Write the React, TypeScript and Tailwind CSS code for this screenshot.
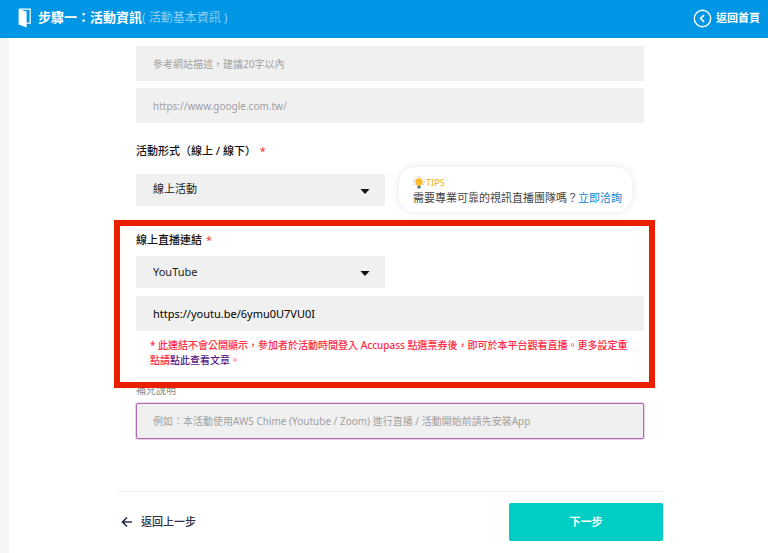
import { useState } from "react";
import type { ReactNode } from "react";

const eventTypes = ["線上活動", "線下活動"];
const platforms = ["YouTube", "Zoom", "Facebook"];

export default function App() {
  const [eventType, setEventType] = useState("線上活動");
  const [platform, setPlatform] = useState("YouTube");
  const [siteText, setSiteText] = useState("");
  const [siteUrl, setSiteUrl] = useState("");
  const [streamUrl, setStreamUrl] = useState("https://youtu.be/6ymu0U7VU0I");
  const [note, setNote] = useState("");

  return (
    <div className="flex min-h-screen flex-col bg-[#f5f5f5] font-['Noto_Sans','Noto_Sans_CJK_TC',sans-serif] text-[11px] text-[#222]">
      <header className="flex h-[38px] items-center justify-between bg-[#0096e6] pr-2 pb-[2px] pl-[18px] text-white">
        <div className="flex items-center gap-[7px]">
          <DoorIcon />
          <h1 className="pb-[2px] text-[13px] leading-4 font-bold">
            步驟一：活動資訊<span className="text-[12px] font-normal text-[#8dcff5]">( 活動基本資訊 )</span>
          </h1>
        </div>
        <a href="#home" className="flex items-center gap-1 font-bold">
          <svg width="19" height="19" viewBox="0 0 19 19" fill="none" stroke="currentColor" aria-hidden="true">
            <circle cx="9.5" cy="9.5" r="8.2" strokeWidth="1.4" />
            <path d="M11 6.2 7.7 9.5l3.3 3.3" strokeWidth="1.7" />
          </svg>
          返回首頁
        </a>
      </header>

      <main className="ml-[9px] flex-1 bg-white pt-2 pb-3 pl-[3px]">
        <form className="mx-auto max-w-[546px]" onSubmit={(event) => event.preventDefault()}>
          <div className="px-[19px]">
            <div className="flex flex-col gap-[7px]">
              <TextField id="site-text" ariaLabel="參考網站描述" value={siteText} onChange={setSiteText} placeholder="參考網站描述，建議20字以內" />
              <TextField id="site-url" ariaLabel="參考網站" value={siteUrl} onChange={setSiteUrl} placeholder="https://www.google.com.tw/" />
            </div>

            <section className="mt-5">
              <FieldLabel htmlFor="event-type">
                活動形式（線上 / 線下） <Required />
              </FieldLabel>
              <div className="mt-2 flex items-center gap-[14px]">
                <Select id="event-type" value={eventType} onChange={setEventType} options={eventTypes} />
                <aside className="rounded-2xl bg-white pt-2 pr-[10px] pb-[6px] pl-[14px] shadow-[0_0_8px_rgba(0,0,0,0.1)]">
                  <p className="flex items-center gap-px text-[9px] leading-[15px] font-medium text-[#fbb62b]">
                    <BulbIcon />
                    TIPS
                  </p>
                  <p className="leading-4 whitespace-nowrap text-[#444]">
                    需要專業可靠的視訊直播團隊嗎？
                    <a href="#contact" className="text-[#0a84d0]">立即洽詢</a>
                  </p>
                </aside>
              </div>
            </section>

            <section className="relative mt-5">
              <FieldLabel htmlFor="platform">
                線上直播連結 <Required />
              </FieldLabel>
              <div className="mt-2 flex flex-col gap-2">
                <Select id="platform" value={platform} onChange={setPlatform} options={platforms} />
                <TextField id="stream-url" ariaLabel="直播網址" value={streamUrl} onChange={setStreamUrl} large />
              </div>
              <p className="mt-[7px] pr-3 pl-[14px] text-[10px] leading-[15px] font-medium text-[#ff2b43]">
                * 此連結不會公開顯示，參加者於活動時間登入 Accupass 點選票券後，即可於本平台觀看直播。更多設定重點請
                <a href="#article" className="text-[#551a8b]">點此查看文章</a>。
              </p>
              {/* highlight frame around the live stream settings */}
              <div className="pointer-events-none absolute -top-3 -right-[11px] -bottom-5 -left-[22px] border-[6px] border-[#e82000]" />
            </section>

            <section className="mt-[14px]">
              <label htmlFor="note" className="block text-[10px] leading-4 text-[#888]">補充說明</label>
              <input
                id="note"
                className="mt-[5px] block h-9 w-full rounded-[2px] border border-[#b06ab3] bg-[#f0f0f0] px-4 text-[10px] ring-1 ring-[#b06ab3]/30 outline-none placeholder:text-[#a0a0a0]"
                onChange={(event) => setNote(event.target.value)}
                placeholder="例如：本活動使用AWS Chime (Youtube / Zoom) 進行直播 / 活動開始前請先安裝App"
                value={note}
              />
            </section>
          </div>

          <footer className="mt-[52px] flex items-center justify-between border-t border-[#f0f0f0] pt-[11px]">
            <button type="button" className="flex items-center gap-2 pl-1 font-medium text-[#2c3048]">
              <svg width="12" height="12" viewBox="0 0 12 12" fill="none" stroke="currentColor" strokeWidth="1.7" aria-hidden="true">
                <path d="M11 6H2M6 1.5 1.5 6 6 10.5" />
              </svg>
              返回上一步
            </button>
            <button type="submit" className="h-[38px] w-[154px] rounded-[2px] bg-[#00cec4] font-bold text-white">
              下一步
            </button>
          </footer>
        </form>
      </main>
    </div>
  );
}

function FieldLabel({ htmlFor, children }: { htmlFor: string; children: ReactNode }) {
  return (
    <label htmlFor={htmlFor} className="block leading-4 font-medium text-[#111]">
      {children}
    </label>
  );
}

function Required() {
  return <span className="ml-px text-[#f04848]">*</span>;
}

type TextFieldProps = {
  id: string;
  ariaLabel: string;
  value: string;
  onChange: (value: string) => void;
  placeholder?: string;
  large?: boolean;
};

function TextField({ id, ariaLabel, value, onChange, placeholder, large }: TextFieldProps) {
  return (
    <input
      id={id}
      aria-label={ariaLabel}
      className={`h-[35px] w-full bg-[#f0f0f0] px-[17px] text-black outline-none placeholder:text-[#a0a0a0] ${large ? "text-[11px]" : "text-[10px]"}`}
      onChange={(event) => onChange(event.target.value)}
      placeholder={placeholder}
      value={value}
    />
  );
}

function Select({ id, value, onChange, options }: { id: string; value: string; onChange: (value: string) => void; options: string[] }) {
  return (
    <div className="relative w-[49%]">
      <select
        id={id}
        className="block h-8 w-full appearance-none bg-[#f0f0f0] pr-8 pl-[17px] text-[11px] text-[#222] outline-none"
        onChange={(event) => onChange(event.target.value)}
        value={value}
      >
        {options.map((option) => (
          <option key={option} value={option}>
            {option}
          </option>
        ))}
      </select>
      <svg className="pointer-events-none absolute top-[15px] right-[15px]" width="10" height="5" viewBox="0 0 10 5" fill="#111" aria-hidden="true">
        <path d="M.5 0h9L5.8 4.3q-.8.8-1.6 0z" />
      </svg>
    </div>
  );
}

function DoorIcon() {
  return (
    <svg width="13" height="20" viewBox="0 0 13 20" aria-hidden="true">
      <path d="M1 1.2h11.2v14H8" fill="none" stroke="#fff" strokeWidth="1.2" />
      <path d="M.6 1 8.6 3.6v16L.6 16.4z" fill="#fff" />
    </svg>
  );
}

function BulbIcon() {
  return (
    <svg width="12" height="13" viewBox="0 0 12 13" aria-hidden="true">
      <path d="M6 0v1M2.6 1l.6.9M9.4 1l-.6.9M.6 3.4l1 .5M11.4 3.4l-1 .5M.1 6h1.1M11.9 6h-1.1M1 8.8l.9-.5M11 8.8l-.9-.5" stroke="#8b99a5" strokeWidth=".7" />
      <path d="M6 1.9a3.9 3.9 0 0 0-2.3 7c.5.5.6.9.6 1.3h3.4c0-.4.1-.8.6-1.3A3.9 3.9 0 0 0 6 1.9z" fill="#fdbb2d" />
      <path d="M4.3 10h3.4v1.6q0 .8-.8.8H5.1q-.8 0-.8-.8z" fill="#5f7787" />
    </svg>
  );
}
